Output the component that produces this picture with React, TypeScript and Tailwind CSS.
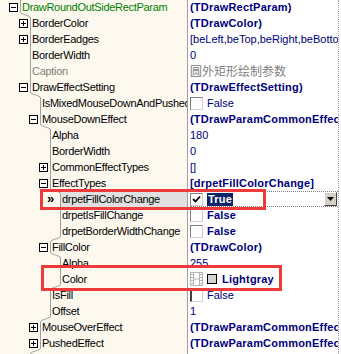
import type { ReactNode } from "react";
import clsx from "clsx";

type Row = {
  name: string;
  level: number;
  box?: "plus" | "minus";
  tone?: "green" | "gray";
  selected?: boolean;
  value: ReactNode;
};

const textPad = ["pl-[22px]", "pl-[32px]", "pl-[42px]", "pl-[52px]", "pl-[62px]"];
const boxPad = ["pl-[9px]", "pl-[19px]", "pl-[29px]", "pl-[39px]"];

function Bold({ children }: { children: ReactNode }) {
  return <span className="font-bold tracking-[0.2px] text-[#000080]">{children}</span>;
}

function Plain({ children }: { children: ReactNode }) {
  return <span className="text-[#000080]">{children}</span>;
}

function ToggleBox({ open }: { open: boolean }) {
  return (
    <span className="relative flex h-[9px] w-[9px] shrink-0 items-center justify-center border border-black bg-white">
      <span className="h-px w-[5px] bg-black" />
      {!open && <span className="absolute h-[5px] w-px bg-black" />}
    </span>
  );
}

function Check({ checked = false, deep = false }: { checked?: boolean; deep?: boolean }) {
  return (
    <span
      className={clsx(
        "flex h-[13px] w-[13px] shrink-0 items-center justify-center bg-white",
        deep
          ? "border-l-2 border-t-2 border-r border-b border-l-[#404040] border-t-[#404040] border-r-[#d4d0c8] border-b-[#d4d0c8]"
          : "border border-l-[#808080] border-t-[#808080] border-r-[#d4d0c8] border-b-[#d4d0c8]"
      )}
    >
      {checked && (
        <svg width="9" height="9" viewBox="0 0 9 9">
          <path d="M1 4 L3.5 6.5 L8 1.5" fill="none" stroke="black" strokeWidth="1.8" />
        </svg>
      )}
    </span>
  );
}

function FilmIcon() {
  return (
    <svg width="13" height="14" viewBox="0 0 13 14" className="shrink-0">
      <g fill="none" stroke="#b4b4b4" strokeWidth="1">
        <rect x="0.5" y="0.5" width="12" height="13" />
        <line x1="3.5" y1="0.5" x2="3.5" y2="13.5" />
        <line x1="9.5" y1="0.5" x2="9.5" y2="13.5" />
        <line x1="3.5" y1="7" x2="9.5" y2="7" />
      </g>
      <g fill="#b4b4b4">
        <rect x="1" y="2" width="2" height="1" />
        <rect x="1" y="5" width="2" height="1" />
        <rect x="1" y="8" width="2" height="1" />
        <rect x="1" y="11" width="2" height="1" />
        <rect x="10" y="2" width="2" height="1" />
        <rect x="10" y="5" width="2" height="1" />
        <rect x="10" y="8" width="2" height="1" />
        <rect x="10" y="11" width="2" height="1" />
      </g>
    </svg>
  );
}

const rows: Row[] = [
  { name: "DrawRoundOutSideRectParam", level: 0, box: "minus", tone: "green", value: <Bold>(TDrawRectParam)</Bold> },
  { name: "BorderColor", level: 1, box: "plus", value: <Bold>(TDrawColor)</Bold> },
  { name: "BorderEadges", level: 1, box: "plus", value: <Plain>[beLeft,beTop,beRight,beBottom]</Plain> },
  { name: "BorderWidth", level: 1, value: <Plain>0</Plain> },
  {
    name: "Caption",
    level: 1,
    tone: "gray",
    value: <span className="font-['Noto_Sans_CJK_SC',sans-serif] text-[12px] text-[#808080]">圆外矩形绘制参数</span>,
  },
  { name: "DrawEffectSetting", level: 1, box: "minus", value: <Bold>(TDrawEffectSetting)</Bold> },
  {
    name: "IsMixedMouseDownAndPushed",
    level: 2,
    value: (
      <>
        <Check />
        <span className="ml-[4px]"><Plain>False</Plain></span>
      </>
    ),
  },
  { name: "MouseDownEffect", level: 2, box: "minus", value: <Bold>(TDrawParamCommonEffect)</Bold> },
  { name: "Alpha", level: 3, value: <Plain>180</Plain> },
  { name: "BorderWidth", level: 3, value: <Plain>0</Plain> },
  { name: "CommonEffectTypes", level: 3, box: "plus", value: <Plain>[]</Plain> },
  { name: "EffectTypes", level: 3, box: "minus", value: <Bold>[drpetFillColorChange]</Bold> },
  {
    name: "drpetFillColorChange",
    level: 4,
    selected: true,
    value: (
      <div className="flex h-full w-full items-center border-y border-dotted border-[#808080]">
        <Check checked />
        <span className="ml-[4px] bg-[#0a246a] px-px font-bold leading-[13px] tracking-[0.2px] text-white">True</span>
        <span className="flex-1" />
        <span className="mr-px flex h-[14px] w-[13px] items-center justify-center border border-l-white border-t-white border-r-[#404040] border-b-[#404040] bg-[#d4d0c8]">
          <svg width="7" height="4" viewBox="0 0 7 4">
            <path d="M0 0 H7 L3.5 4 Z" fill="black" />
          </svg>
        </span>
      </div>
    ),
  },
  {
    name: "drpetIsFillChange",
    level: 4,
    value: (
      <>
        <Check />
        <span className="ml-[4px]"><Bold>False</Bold></span>
      </>
    ),
  },
  {
    name: "drpetBorderWidthChange",
    level: 4,
    value: (
      <>
        <Check />
        <span className="ml-[4px]"><Bold>False</Bold></span>
      </>
    ),
  },
  { name: "FillColor", level: 3, box: "minus", value: <Bold>(TDrawColor)</Bold> },
  { name: "Alpha", level: 4, value: <Plain>255</Plain> },
  {
    name: "Color",
    level: 4,
    value: (
      <>
        <FilmIcon />
        <span className="ml-[4px] h-[10px] w-[10px] shrink-0 border border-black bg-[#d3d3d3]" />
        <span className="ml-[5px]"><Bold>Lightgray</Bold></span>
      </>
    ),
  },
  {
    name: "IsFill",
    level: 3,
    value: (
      <>
        <Check deep />
        <span className="ml-[4px]"><Plain>False</Plain></span>
      </>
    ),
  },
  { name: "Offset", level: 3, value: <Plain>1</Plain> },
  { name: "MouseOverEffect", level: 2, box: "plus", value: <Bold>(TDrawParamCommonEffect)</Bold> },
  { name: "PushedEffect", level: 2, box: "plus", value: <Bold>(TDrawParamCommonEffect)</Bold> },
];

// one continuous guide line that jogs left/right with the indent of each row
function treePath() {
  const lx = (l: number) => 20.5 + 10 * l;
  let d = `M ${lx(rows[0].level)} 0`;
  rows.forEach((r, i) => {
    const x = lx(r.level);
    const yb = 16 * i + 15;
    const next = rows[i + 1] ? rows[i + 1].level : 1;
    if (next !== r.level) {
      const xn = lx(next);
      d += ` V ${yb - 3} C ${x} ${yb} ${xn} ${yb} ${xn} ${yb + 3}`;
    }
  });
  return d + " V 360";
}

function NameCell({ row }: { row: Row }) {
  if (row.selected) {
    return (
      <div className="flex h-4 w-[187px] shrink-0 items-center overflow-hidden whitespace-nowrap pl-[47px]">
        <span className="w-[13px] text-[13px] font-bold leading-4 text-black">»</span>
        <span className="flex h-full flex-1 items-center bg-[#e0e0e0] pl-[2px] tracking-[-0.3px]">{row.name}</span>
      </div>
    );
  }
  return (
    <div
      className={clsx(
        "flex h-4 w-[187px] shrink-0 items-center overflow-hidden whitespace-nowrap",
        row.box ? boxPad[row.level] : textPad[row.level]
      )}
    >
      {row.box && <ToggleBox open={row.box === "minus"} />}
      <span
        className={clsx(
          "tracking-[-0.3px]",
          row.box && "ml-[4px]",
          row.tone === "green" && "text-[#008000]",
          row.tone === "gray" && "text-[#808080]"
        )}
      >
        {row.name}
      </span>
    </div>
  );
}

export default function App() {
  return (
    <div className="relative flex h-[354px] w-[341px] overflow-hidden bg-white font-['Liberation_Sans',Arial,sans-serif] text-[11px] leading-4 text-black">
      <div className="relative flex w-[338px] flex-col">
        <div className="absolute left-0 top-0 h-full w-[187px] bg-[#fdf9ef]" />
        <div className="relative -mt-px flex flex-col">
          {rows.map((r, i) => (
            <div key={i} className="flex h-4">
              <NameCell row={r} />
              <div className="flex h-4 w-[151px] shrink-0 items-center overflow-hidden whitespace-nowrap border-l border-[#a0a0a0] bg-white pl-[2px]">
                {r.value}
              </div>
            </div>
          ))}
        </div>
        <svg className="pointer-events-none absolute left-0 top-0" width="187" height="354">
          <path d={treePath()} fill="none" stroke="#a0a0a0" strokeWidth="1" />
        </svg>
        <div className="absolute top-0 h-full w-px bg-[#a0a0a0] left-[187px]" />
      </div>
      <div className="w-[3px] border-l border-dotted border-[#a0a0a0] bg-white" />

      {/* red annotation frames */}
      <div className="pointer-events-none absolute left-[40px] top-[189px] h-[21px] w-[226px] border-[3px] border-[#ee3a3a]" />
      <div className="pointer-events-none absolute left-[41px] top-[265px] h-[26px] w-[241px] border-[3px] border-[#ee3a3a]" />
    </div>
  );
}
